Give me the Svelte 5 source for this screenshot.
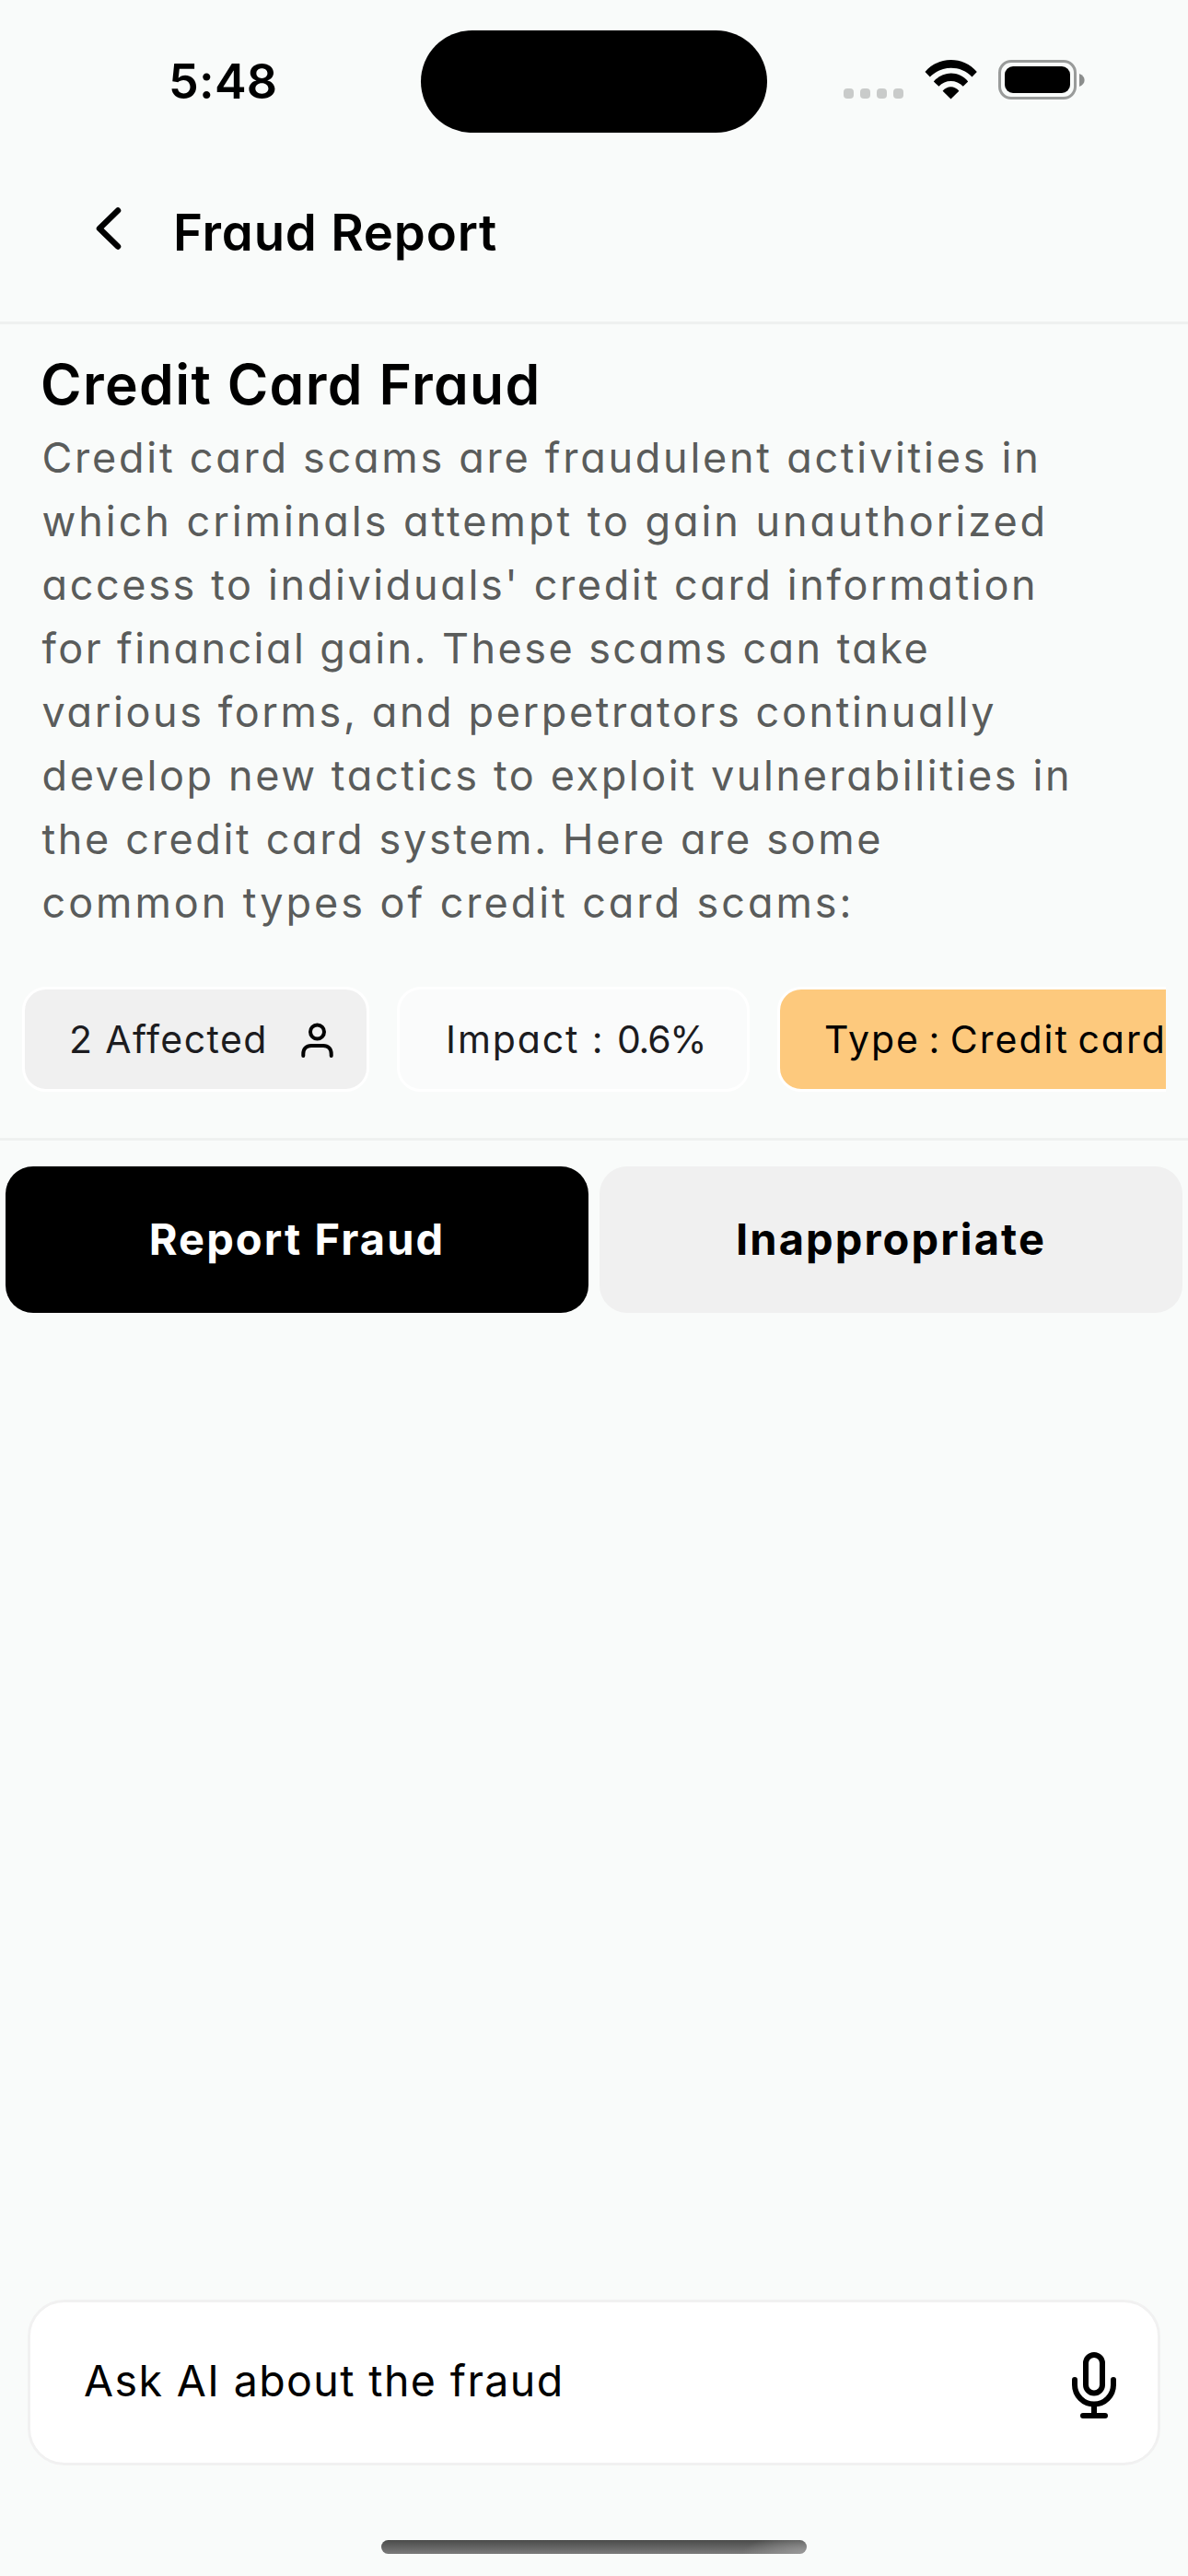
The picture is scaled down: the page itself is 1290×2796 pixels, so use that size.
<script>
  const lines = [
    { text: 'Credit card scams are fraudulent activities in', tracking: 2.73 },
    { text: 'which criminals attempt to gain unauthorized', tracking: 2.95 },
    { text: "access to individuals' credit card information", tracking: 2.62 },
    { text: 'for financial gain. These scams can take', tracking: 2.42 },
    { text: 'various forms, and perpetrators continually', tracking: 2.6 },
    { text: 'develop new tactics to exploit vulnerabilities in', tracking: 2.6 },
    { text: 'the credit card system. Here are some', tracking: 2.64 },
    { text: 'common types of credit card scams:', tracking: 2.94 }
  ];
</script>

<div class="screen">
  <div class="status">
    <span class="time">5:48</span>
    <div class="island"></div>
    <div class="dots"><i></i><i></i><i></i><i></i></div>
    <svg class="wifi" width="58" height="43" viewBox="0 0 58 43">
      <path d="M0.500 13C15 -4.200 42 -4.200 56.800 13L51.500 18.600C39.500 5.600 18 5.600 5.800 18.600Z" />
      <path d="M9.800 23.400C20 11.600 37.500 11.600 47.200 23.400L41.800 28.800C34.500 21 22.500 21 15.400 28.800Z" />
      <path d="M19.600 33.800C24.500 27.600 32.500 27.600 37.400 33.800L28.500 42.400Z" />
    </svg>
    <div class="battery"><div class="charge"></div></div>
    <svg class="nub" width="6" height="14" viewBox="0 0 6 14"><path d="M0 0C7.500 2.500 7.500 11.500 0 14Z" /></svg>
  </div>

  <header class="nav">
    <svg class="back" width="34" height="50" viewBox="0 0 34 50">
      <path d="M27 5.500L7 25L27 44.500" />
    </svg>
    <h1>Fraud Report</h1>
  </header>

  <section class="details">
    <h2>Credit Card Fraud</h2>
    <p>
      {#each lines as line}
        <span class="line" style="letter-spacing: {line.tracking}px">{line.text}</span>
      {/each}
    </p>
    <div class="chips">
      <div class="chip affected">
        <span>2 Affected</span>
        <svg width="38" height="40" viewBox="0 0 38 40">
          <circle cx="18.500" cy="12" r="7.500" />
          <path d="M3.300 38V36C3.300 30.500 6.500 27 12 27H25C30.500 27 33.700 30.500 33.700 36V38" />
        </svg>
      </div>
      <div class="chip impact"><span>Impact : <span class="value">0.6%</span></span></div>
      <div class="chip type"><span>Type : Credit card</span></div>
    </div>
  </section>

  <div class="actions">
    <button class="report">Report Fraud</button>
    <button class="flag">Inappropriate</button>
  </div>

  <footer>
    <div class="ask">
      <span>Ask AI about the fraud</span>
      <svg width="48" height="72" viewBox="0 0 48 72">
        <rect x="15" y="3" width="18" height="41.500" rx="9" />
        <path d="M3 30V35.500A21 21 0 0 0 45 35.500V30M24 56.500V69M12 69H36" />
      </svg>
    </div>
    <div class="home"></div>
  </footer>
</div>

<style>
  :global(body) {
    margin: 0;
    background: #f9fbfa;
  }
  .screen {
    display: flex;
    flex-direction: column;
    width: 1290px;
    height: 2796px;
    overflow: hidden;
    background: #f9fbfa;
    color: #000;
    font-family: Inter, 'Liberation Sans', sans-serif;
  }
  .status {
    display: flex;
    align-items: flex-start;
    flex: none;
    height: 177px;
  }
  .time {
    width: 274px;
    margin: 57px 0 0 183px;
    font-size: 52px;
    line-height: 64px;
    font-weight: 600;
    letter-spacing: 0.3px;
  }
  .island {
    width: 376px;
    height: 111px;
    margin-top: 33px;
    border-radius: 56px;
    background: #000;
  }
  .dots {
    display: flex;
    gap: 7px;
    margin: 96px 0 0 83px;
  }
  .dots i {
    width: 11px;
    height: 11px;
    border-radius: 4px;
    background: #c9cbca;
  }
  .wifi {
    margin: 65px 0 0 23px;
  }
  .battery {
    box-sizing: border-box;
    width: 85px;
    height: 43px;
    margin: 65px 0 0 22px;
    padding: 4px;
    border: 3px solid #999b9a;
    border-radius: 14px;
  }
  .charge {
    height: 100%;
    border-radius: 9px;
    background: #000;
  }
  .nub {
    margin: 80px 0 0 3px;
    fill: #8b8d8c;
  }
  .nav {
    display: flex;
    flex: none;
    box-sizing: border-box;
    height: 175px;
    border-bottom: 3px solid #eff1f0;
  }
  .back {
    margin: 46px 0 0 101px;
    fill: none;
    stroke: #000;
    stroke-width: 6.500px;
    stroke-linecap: round;
    stroke-linejoin: round;
  }
  h1 {
    margin: 35px 0 0 53px;
    font-size: 54.500px;
    line-height: 80px;
    font-weight: 600;
    letter-spacing: 0.8px;
    font-feature-settings: 'cv11';
  }
  .details {
    flex: none;
    box-sizing: border-box;
    height: 886px;
    padding: 25px 24px 0;
    border-bottom: 3px solid #eff1f0;
  }
  h2 {
    margin: 0 0 5px 20px;
    font-size: 60.500px;
    line-height: 80px;
    font-weight: 600;
    letter-spacing: 1.35px;
    font-feature-settings: 'cv11';
  }
  p {
    margin: 0 0 57px 21.500px;
    color: #5a5c5b;
    font-size: 45px;
    line-height: 69px;
    font-feature-settings: 'cv11';
  }
  .line {
    display: block;
    white-space: nowrap;
  }
  .chips {
    display: flex;
    gap: 30px;
    overflow: hidden;
  }
  .chip {
    display: flex;
    flex: none;
    align-items: center;
    box-sizing: border-box;
    height: 114px;
    padding-left: 48px;
    border: 3px solid #fff;
    border-radius: 26px;
    color: #1c1c1f;
    font-size: 41px;
    line-height: 60px;
    font-feature-settings: 'cv11';
    white-space: nowrap;
  }
  .affected {
    width: 377px;
    background: #f0f0f0;
    letter-spacing: 1.4px;
  }
  .affected > span {
    width: 251px;
  }
  .affected svg {
    fill: none;
    stroke: #000;
    stroke-width: 4px;
    stroke-linecap: round;
  }
  .impact {
    width: 383px;
    padding-left: 50px;
    background: #fafbfb;
    letter-spacing: 1.9px;
  }
  .value {
    letter-spacing: -1.2px;
  }
  .type {
    width: 480px;
    background: #fdc97d;
    color: #000;
    letter-spacing: 2px;
    word-spacing: -4px;
  }
  .actions {
    display: flex;
    flex: none;
    gap: 12px;
    padding: 28px 6px 0;
  }
  button {
    flex: 1;
    height: 159px;
    padding: 0 0 2px;
    border: 0;
    border-radius: 30px;
    font: 650 47px/60px Inter, 'Liberation Sans', sans-serif;
  }
  .report {
    background: #000;
    color: #fff;
    letter-spacing: 2.1px;
  }
  .flag {
    background: #f0f0f0;
    color: #000;
    letter-spacing: 2.1px;
  }
  footer {
    margin-top: auto;
    padding: 0 30px 24px;
  }
  .ask {
    display: flex;
    align-items: center;
    justify-content: space-between;
    box-sizing: border-box;
    height: 180px;
    padding: 0 45px 4px 58px;
    border: 3px solid #f1f1f1;
    border-radius: 40px;
    background: #fff;
    font-size: 46.500px;
    line-height: 60px;
    letter-spacing: 1.4px;
  }
  .ask svg {
    margin-top: 10px;
    fill: none;
    stroke: #000;
    stroke-width: 6px;
    stroke-linecap: round;
  }
  .home {
    width: 462px;
    height: 15px;
    margin: 81px auto 0;
    border-radius: 8px;
    background: radial-gradient(ellipse 70px 22px at 100% 100%, #9a9a9a, transparent), linear-gradient(#4a4b4a, #7b7b7b);
  }
</style>
